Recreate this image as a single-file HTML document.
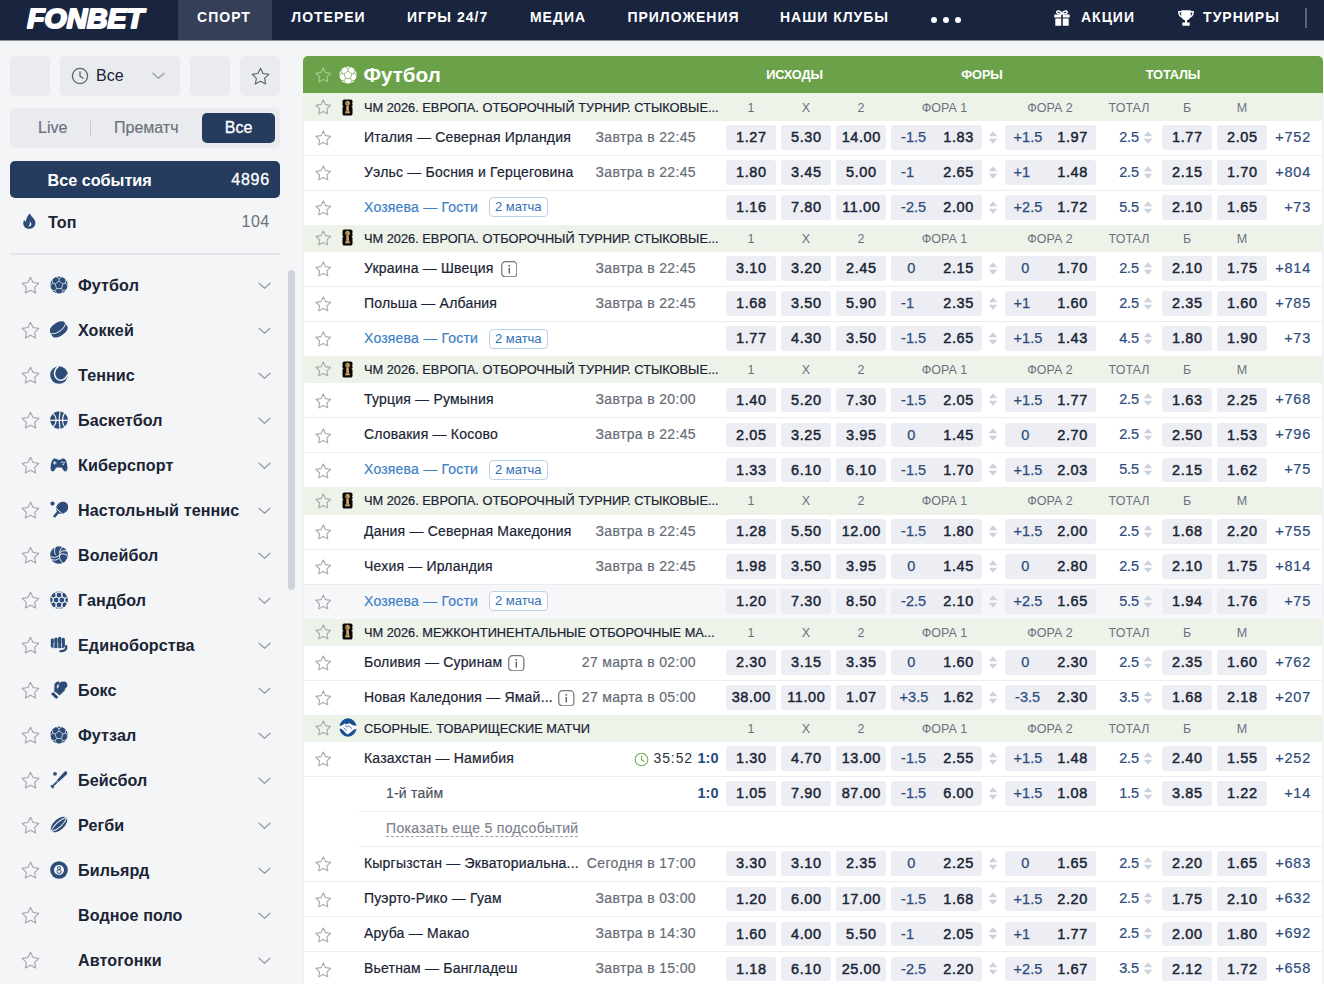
<!DOCTYPE html>
<html lang="ru"><head><meta charset="utf-8"><title>FONBET</title>
<style>
*{box-sizing:border-box;margin:0;padding:0}
html,body{width:1324px;height:984px;overflow:hidden;background:#f4f5f7;font-family:"Liberation Sans",sans-serif;color:#1a2434}
svg{display:block}
span,i,b{font-style:normal}
/* NAV */
.nav{position:absolute;left:0;top:0;width:1324px;height:41px;background:#19243f;border-bottom:1px solid #8b909d}
.logo{position:absolute;left:25px;top:5.5px}
.tabsel{position:absolute;left:178px;top:0;width:94px;height:40px;background:#353f57}
.ni{position:absolute;top:0;width:200px;height:40px;line-height:34px;text-align:center;color:#fff;font-weight:bold;font-size:14px;letter-spacing:1px;white-space:nowrap}
.dots{position:absolute;left:931px;top:16.5px;width:32px;height:6px}
.dots i{position:absolute;top:0;width:6px;height:6px;border-radius:3px;background:#fff}
.dots i:nth-child(1){left:0}.dots i:nth-child(2){left:12px}.dots i:nth-child(3){left:24px}
.nicon{position:absolute}
.vline{position:absolute;left:1305px;top:8px;width:2px;height:20px;background:#5b6478}
/* SIDEBAR */
.side{position:absolute;left:0;top:0;width:300px;height:984px}
.sb{position:absolute;top:56px;height:40px;background:#eaebef;border-radius:5px}
.clk{position:absolute;left:11px;top:11px}
.sbt{position:absolute;left:36px;top:0;line-height:40px;font-size:16px;color:#1a2434}
.chv{position:absolute}
.st{position:absolute}
.seg{position:absolute;left:10px;top:108px;width:270px;height:40px;background:#eaebef;border-radius:5px}
.sg{position:absolute;top:0;line-height:39px;font-size:16px;color:#6c7380;-webkit-text-stroke:.2px #6c7380}
.sgl{position:absolute;left:80px;top:12.500px;width:1px;height:15px;background:#c5c8cf}
.pill{position:absolute;left:192px;top:5px;width:73px;height:30px;border-radius:5px;background:#253c5f;color:#fff;font-size:16px;line-height:29px;text-align:center;-webkit-text-stroke:.3px #fff}
.allev{position:absolute;left:10px;top:161px;width:270px;height:37px;border-radius:5px;background:#253c5f;color:#fff}
.allev .t{position:absolute;left:37.500px;top:0;line-height:38px;font-size:16.200px;font-weight:bold}
.allev .n{position:absolute;right:10px;top:0;line-height:38px;font-size:16px;-webkit-text-stroke:.3px #fff;letter-spacing:.8px}
.top{position:absolute;left:10px;top:203px;width:270px;height:37px}
.top .fl{position:absolute;left:12.700px;top:10px}
.top .t{position:absolute;left:38px;top:0;line-height:38px;font-size:16.200px;font-weight:bold;color:#1a2434}
.top .n{position:absolute;right:10.500px;top:0;line-height:38px;font-size:16px;color:#6b717c;letter-spacing:.4px}
.hr{position:absolute;left:10px;top:252.500px;width:270px;height:2px;background:#e3e5e9}
.scr{position:absolute;left:288px;top:270px;width:6.500px;height:320px;border-radius:3.500px;background:#d1d4dd}
.sp{position:absolute;left:0;width:284px;height:45px}
.sp .st{left:20px;top:11.500px}
.sp .ic{position:absolute;left:49.750px;top:13px}
.sp .t{position:absolute;left:78px;top:0;line-height:45px;font-size:16.100px;font-weight:bold;letter-spacing:.1px;color:#1a2434;white-space:nowrap}
.sp .chv{left:257.700px;top:18.500px}
/* TABLE */
.tbl{position:absolute;left:303px;top:56px;width:1020px;height:940px;background:#fff;border-radius:5px 5px 0 0;overflow:hidden}
.gh{position:relative;height:37px;background:#6ba249}
.gic{position:absolute;left:36px;top:9.500px}
.gt{position:absolute;left:60.500px;top:0;line-height:37px;font-size:20.600px;font-weight:bold;color:#fff}
.gl{position:absolute;top:0;width:200px;text-align:center;line-height:38px;font-size:12.800px;font-weight:bold;color:#fff;letter-spacing:-.15px}
.lh{position:relative;height:27.150px;margin-top:-1px;background:#eef3ea;z-index:1}
.lh.f{margin-top:0;height:27.700px;border-top:1px solid #eef3ea}
.lic{position:absolute;left:39px;top:4.500px}
.lt{position:absolute;left:61px;top:0;line-height:28px;font-size:12.800px;color:#1a2434;white-space:nowrap;-webkit-text-stroke:.2px}
.hd{position:absolute;top:0;width:50px;text-align:center;line-height:28px;font-size:12.500px;color:#6b717c;white-space:nowrap}
.r{position:relative;height:35.050px;box-shadow:inset 1px 0 0 #edeef1,inset -1px 0 0 #edeef1;border-bottom:1px solid #ebedf0;background:#fff}
.r.hov{background:#f7f7f9}
.r.subr{border-bottom:none}
.r.subr:after{content:"";position:absolute;left:56px;right:0;bottom:0;height:1px;background:#ebedf0}
.nm{position:absolute;left:61px;top:0;line-height:32.500px;font-size:14px;letter-spacing:.2px;color:#1a2434;white-space:nowrap;-webkit-text-stroke:.2px}
.nm.bl{color:#3c80c6}
.nm.sn{left:83px;color:#4b525e}
.nm.mr{left:83px;color:#7d838d;letter-spacing:.33px;text-decoration:underline dashed #9a9fa8 1px;text-underline-offset:3px}
.bd{position:absolute;left:186px;top:6.500px;width:58.500px;height:20px;border:1px solid #b9d2ec;border-radius:4px;font-size:13px;line-height:18px;text-align:center;color:#2f6fb4;background:#fff}
.inf{position:absolute;top:8.900px;margin-left:-.5px}
.tm{position:absolute;right:627px;top:0;line-height:32.500px;font-size:14px;letter-spacing:.35px;color:#666c78;white-space:nowrap;-webkit-text-stroke:.2px}
.lclk{position:absolute;left:331px;top:9.500px}
.ltm{position:absolute;left:350.500px;top:0;line-height:32.500px;font-size:14px;letter-spacing:.9px;color:#2a3140}
.sc{position:absolute;right:604.500px;top:0;line-height:32.500px;font-size:14.500px;font-weight:bold;color:#254a80}
.c{position:absolute;top:4.300px;width:50px;height:24.800px;border-radius:3px;background:#eceef3;text-align:center;line-height:24.500px;font-size:14.500px;font-weight:normal;-webkit-text-stroke:.45px #1a2434;letter-spacing:.6px;text-indent:.6px;color:#1a2434}
.c.w{width:90.500px}
.c b{font-weight:normal}
.c .h{position:absolute;left:10.100px;text-align:left;-webkit-text-stroke:.25px #2d4c7c;text-indent:0;font-weight:normal;color:#2d4c7c;letter-spacing:0}
.c .v{position:absolute;right:0;width:46.500px;text-align:center}
.ud{position:absolute;top:9px}
.tot{position:absolute;right:184px;top:0;line-height:32.500px;font-size:14.500px;color:#2d4c7c;letter-spacing:-.1px;-webkit-text-stroke:.2px}
.more{position:absolute;right:12px;top:0;line-height:32.500px;font-size:14.500px;color:#2d4c7c;letter-spacing:.75px;-webkit-text-stroke:.2px}
.c .h.z{left:16.200px}
.c .h.p{left:8.600px}

</style></head>
<body>
<div class="nav">
<div class="logo"><svg width="124" height="26" viewBox="0 0 124 26"><text x="2.300" y="22" textLength="116.500" lengthAdjust="spacingAndGlyphs" font-family="Liberation Sans, sans-serif" font-weight="bold" font-style="italic" font-size="26.800" fill="#fff" stroke="#fff" stroke-width="2" stroke-linejoin="round">FONBET</text></svg></div>
<div class="tabsel"></div>
<div class="ni" style="left:124.0px">СПОРТ</div>
<div class="ni" style="left:228.5px">ЛОТЕРЕИ</div>
<div class="ni" style="left:347.6px">ИГРЫ 24/7</div>
<div class="ni" style="left:458.0px">МЕДИА</div>
<div class="ni" style="left:583.5px">ПРИЛОЖЕНИЯ</div>
<div class="ni" style="left:734.5px">НАШИ КЛУБЫ</div>
<div class="dots"><i></i><i></i><i></i></div>
<div class="nicon" style="left:1053px;top:9px"><svg width="18" height="18" viewBox="0 0 18 18"><path d="M1.300 5.400h6.900v3.000H1.300zM9.800 5.400h6.900v3.000H9.800zM2.300 9.500h5.900v7.300H2.300zM9.800 9.500h5.900v7.300H9.800z" fill="#fff"/><path d="M9 5c-1.500-3.800-5.500-3.600-5.200-1.700C4.100 5 7 5 9 5zM9 5c1.500-3.800 5.500-3.600 5.200-1.700C13.900 5 11 5 9 5z" fill="none" stroke="#fff" stroke-width="1.500"/></svg></div>
<div class="ni" style="left:1008.0px">АКЦИИ</div>
<div class="nicon" style="left:1177px;top:9px"><svg width="18" height="18" viewBox="0 0 18 18"><path d="M4.200 1.300h9.600v4.600c0 3.200-2.000 5.300-4.800 5.300S4.200 9.100 4.200 5.900z" fill="#fff"/><path d="M4.400 2.800H1.800c0 3.200 1.300 4.800 3.400 5.300M13.600 2.800h2.600c0 3.200-1.300 4.800-3.400 5.300" fill="none" stroke="#fff" stroke-width="1.400"/><path d="M8 10.500h2v3.200H8zM5.300 13.500h7.400v3.300H5.300z" fill="#fff"/></svg></div>
<div class="ni" style="left:1141.5px">ТУРНИРЫ</div>
<div class="vline"></div>
</div>
<div class="side">
<div class="sb" style="left:10px;width:40px"></div>
<div class="sb" style="left:60px;width:120px"><span class="clk"><svg width="18" height="18" viewBox="0 0 18 18"><circle cx="9" cy="9" r="7.6" fill="none" stroke="#5d6470" stroke-width="1.3"/><path d="M9 4.6V9.3l3 1.8" fill="none" stroke="#5d6470" stroke-width="1.3" stroke-linecap="round" stroke-linejoin="round"/></svg></span><span class="sbt">Все</span><span class="chv" style="left:92px;top:16px"><svg width="13" height="8" viewBox="0 0 13 8"><path d="M1 1.200l5.500 5L12 1.200" fill="none" stroke="#9a9fa8" stroke-width="1.4" stroke-linecap="round" stroke-linejoin="round"/></svg></span></div>
<div class="sb" style="left:190px;width:40px"></div>
<div class="sb" style="left:240px;width:40px"><span class="st" style="left:9.5px;top:9.5px"><svg width="21" height="21" viewBox="0 0 24 24"><path d="M12 2.6l2.9 6 6.6.9-4.8 4.6 1.2 6.5L12 17.5l-5.9 3.1 1.2-6.5L2.5 9.5l6.6-.9z" fill="none" stroke="#5f6672" stroke-width="1.35" stroke-linejoin="round"/></svg></span></div>
<div class="seg"><span class="sg" style="left:28px">Live</span><i class="sgl"></i><span class="sg" style="left:104px">Прематч</span><span class="pill">Все</span></div>
<div class="allev"><span class="t">Все события</span><span class="n">4896</span></div>
<div class="top"><span class="fl"><svg width="13" height="16" viewBox="0 0 13 16"><path d="M6.900.2C7.400 3.200 12.400 5.200 12.400 10c0 3.400-2.600 5.800-6 5.800S.3 13.600.3 10.400c0-1.600.4-2.800.8-3.600.5 1 1.100 1.600 1.800 1.900C2.900 5.200 5 2.200 6.900.2z" fill="#2d4d78"/><path d="M6.600 8.600c1.800 1.200 2.200 2.800 1.400 4-.6.900-1.800 1.100-2.600.8 1.400-1 1.700-2.800 1.200-4.800z" fill="#f4f5f7"/></svg></span><span class="t">Топ</span><span class="n">104</span></div>
<div class="hr"></div>
<div class="scr"></div>
<div class="sp" style="top:263px"><span class="st"><svg width="21" height="21" viewBox="0 0 24 24"><path d="M12 2.6l2.9 6 6.6.9-4.8 4.6 1.2 6.5L12 17.5l-5.9 3.1 1.2-6.5L2.5 9.5l6.6-.9z" fill="none" stroke="#a3a6ab" stroke-width="1.3" stroke-linejoin="round"/></svg></span><span class="ic"><svg width="18" height="18" viewBox="0 0 18 18"><circle cx="9" cy="9" r="8.800" fill="#2d4d78"/><path d="M9 5.1 L12.9 7.93 L11.41 12.52 L6.59 12.52 L5.1 7.93ZM9 5.1L9 2.7M9 2.7L5.44 0.47M9 2.7L12.56 0.47M12.9 7.93L15.18 7.19M15.18 7.19L16.2 3.12M15.18 7.19L18.4 9.89M11.41 12.52L12.82 14.46M12.82 14.46L17.01 14.17M12.82 14.46L11.25 18.35M6.59 12.52L5.18 14.46M5.18 14.46L6.75 18.35M5.18 14.46L0.99 14.17M5.1 7.93L2.82 7.19M2.82 7.19L-0.4 9.89M2.82 7.19L1.8 3.12" fill="none" stroke="#f4f5f7" stroke-width=".7" stroke-linejoin="round"/><circle cx="9" cy="9" r="9.600" fill="none" stroke="#f4f5f7" stroke-width="1.600"/></svg></span><span class="t">Футбол</span><span class="chv"><svg width="13" height="8" viewBox="0 0 13 8"><path d="M1 1.200l5.500 5L12 1.200" fill="none" stroke="#9a9fa8" stroke-width="1.4" stroke-linecap="round" stroke-linejoin="round"/></svg></span></div>
<div class="sp" style="top:308px"><span class="st"><svg width="21" height="21" viewBox="0 0 24 24"><path d="M12 2.6l2.9 6 6.6.9-4.8 4.6 1.2 6.5L12 17.5l-5.9 3.1 1.2-6.5L2.5 9.5l6.6-.9z" fill="none" stroke="#a3a6ab" stroke-width="1.3" stroke-linejoin="round"/></svg></span><span class="ic"><svg width="18" height="18" viewBox="0 0 18 18"><g transform="rotate(-34 9 9)"><ellipse cx="9" cy="5.700" rx="8.900" ry="4.100" fill="#2d4d78"/><path d="M.1 6.700A8.900 4.100 0 0 0 17.900 6.700V10.800A8.900 4.100 0 0 1 .1 10.800z" fill="#2d4d78"/></g></svg></span><span class="t">Хоккей</span><span class="chv"><svg width="13" height="8" viewBox="0 0 13 8"><path d="M1 1.200l5.500 5L12 1.200" fill="none" stroke="#9a9fa8" stroke-width="1.4" stroke-linecap="round" stroke-linejoin="round"/></svg></span></div>
<div class="sp" style="top:353px"><span class="st"><svg width="21" height="21" viewBox="0 0 24 24"><path d="M12 2.6l2.9 6 6.6.9-4.8 4.6 1.2 6.5L12 17.5l-5.9 3.1 1.2-6.5L2.5 9.5l6.6-.9z" fill="none" stroke="#a3a6ab" stroke-width="1.3" stroke-linejoin="round"/></svg></span><span class="ic"><svg width="18" height="18" viewBox="0 0 18 18"><circle cx="9" cy="9" r="8.800" fill="#2d4d78"/><path d="M8.400.3C3.600 3.800 3.400 10.300 7 13s8.600 1 10.700-4.400" fill="none" stroke="#f4f5f7" stroke-width="1.500"/></svg></span><span class="t">Теннис</span><span class="chv"><svg width="13" height="8" viewBox="0 0 13 8"><path d="M1 1.200l5.500 5L12 1.200" fill="none" stroke="#9a9fa8" stroke-width="1.4" stroke-linecap="round" stroke-linejoin="round"/></svg></span></div>
<div class="sp" style="top:398px"><span class="st"><svg width="21" height="21" viewBox="0 0 24 24"><path d="M12 2.6l2.9 6 6.6.9-4.8 4.6 1.2 6.5L12 17.5l-5.9 3.1 1.2-6.5L2.5 9.5l6.6-.9z" fill="none" stroke="#a3a6ab" stroke-width="1.3" stroke-linejoin="round"/></svg></span><span class="ic"><svg width="18" height="18" viewBox="0 0 18 18"><circle cx="9" cy="9" r="8.800" fill="#2d4d78"/><path d="M.2 9.400h17.600M10 .2C9 5.500 9 12.500 10 17.800M2.800 2.400C7.200 6 7.200 12.500 3 15.800M14.600 1.800c-2.800 4-2.800 10.800.2 14.600" fill="none" stroke="#f4f5f7" stroke-width="1.150"/></svg></span><span class="t">Баскетбол</span><span class="chv"><svg width="13" height="8" viewBox="0 0 13 8"><path d="M1 1.200l5.500 5L12 1.200" fill="none" stroke="#9a9fa8" stroke-width="1.4" stroke-linecap="round" stroke-linejoin="round"/></svg></span></div>
<div class="sp" style="top:443px"><span class="st"><svg width="21" height="21" viewBox="0 0 24 24"><path d="M12 2.6l2.9 6 6.6.9-4.8 4.6 1.2 6.5L12 17.5l-5.9 3.1 1.2-6.5L2.5 9.5l6.6-.9z" fill="none" stroke="#a3a6ab" stroke-width="1.3" stroke-linejoin="round"/></svg></span><span class="ic"><svg width="18" height="18" viewBox="0 0 18 18"><path d="M3.400 3c1.400-.8 3.100-.5 4.100.8h3c1-1.300 2.700-1.600 4.100-.8 1.500.9 2.100 3.200 2.600 6.300.5 3.200.3 5.400-1.200 6-1.400.6-2.500-.7-3.500-2.600-.4-.9-1-1.300-1.800-1.300H7.300c-.8 0-1.400.4-1.800 1.300-1 1.900-2.100 3.200-3.500 2.600-1.500-.6-1.700-2.800-1.200-6C1.300 6.200 1.900 3.900 3.400 3z" fill="#2d4d78"/><path d="M3 6.900h3.400M4.700 5.200v3.400" stroke="#f4f5f7" stroke-width="1"/><circle cx="12" cy="6" r=".8" fill="#f4f5f7"/><circle cx="14.100" cy="6.600" r=".8" fill="#f4f5f7"/><circle cx="13.300" cy="8.300" r=".8" fill="#f4f5f7"/></svg></span><span class="t">Киберспорт</span><span class="chv"><svg width="13" height="8" viewBox="0 0 13 8"><path d="M1 1.200l5.500 5L12 1.200" fill="none" stroke="#9a9fa8" stroke-width="1.4" stroke-linecap="round" stroke-linejoin="round"/></svg></span></div>
<div class="sp" style="top:488px"><span class="st"><svg width="21" height="21" viewBox="0 0 24 24"><path d="M12 2.6l2.9 6 6.6.9-4.8 4.6 1.2 6.5L12 17.5l-5.9 3.1 1.2-6.5L2.5 9.5l6.6-.9z" fill="none" stroke="#a3a6ab" stroke-width="1.3" stroke-linejoin="round"/></svg></span><span class="ic"><svg width="18" height="18" viewBox="0 0 18 18"><g transform="rotate(42 11.600 7.400)"><ellipse cx="11.600" cy="6.600" rx="5.700" ry="6.500" fill="#2d4d78"/><rect x="10.300" y="12.600" width="2.600" height="6.400" rx=".9" fill="#2d4d78"/><path d="M5.500 11h12.200" stroke="#f4f5f7" stroke-width=".9"/></g><circle cx="2.500" cy="2.600" r="2.100" fill="#2d4d78"/></svg></span><span class="t">Настольный теннис</span><span class="chv"><svg width="13" height="8" viewBox="0 0 13 8"><path d="M1 1.200l5.500 5L12 1.200" fill="none" stroke="#9a9fa8" stroke-width="1.4" stroke-linecap="round" stroke-linejoin="round"/></svg></span></div>
<div class="sp" style="top:533px"><span class="st"><svg width="21" height="21" viewBox="0 0 24 24"><path d="M12 2.6l2.9 6 6.6.9-4.8 4.6 1.2 6.5L12 17.5l-5.9 3.1 1.2-6.5L2.5 9.5l6.6-.9z" fill="none" stroke="#a3a6ab" stroke-width="1.3" stroke-linejoin="round"/></svg></span><span class="ic"><svg width="18" height="18" viewBox="0 0 18 18"><circle cx="9" cy="9" r="8.800" fill="#2d4d78"/><path d="M9.800 8.600C9.200 5 10.500 2 13.200 .9M9.800 8.600c3-1.500 6.200-.6 8 1.600M9.800 8.600C7.800 11.500 4 12 .6 10.600M5.600 1C3.800 3.600 4.200 7.200 6.200 9.200M17 5.200c-2.600-1.200-5.400-.4-7.200 1.400M12.800 17c-2.400-1.800-3.800-5-3-8.400M1.400 13.400c3 1.400 6 .6 7.800-1.200" fill="none" stroke="#f4f5f7" stroke-width="1"/></svg></span><span class="t">Волейбол</span><span class="chv"><svg width="13" height="8" viewBox="0 0 13 8"><path d="M1 1.200l5.500 5L12 1.200" fill="none" stroke="#9a9fa8" stroke-width="1.4" stroke-linecap="round" stroke-linejoin="round"/></svg></span></div>
<div class="sp" style="top:578px"><span class="st"><svg width="21" height="21" viewBox="0 0 24 24"><path d="M12 2.6l2.9 6 6.6.9-4.8 4.6 1.2 6.5L12 17.5l-5.9 3.1 1.2-6.5L2.5 9.5l6.6-.9z" fill="none" stroke="#a3a6ab" stroke-width="1.3" stroke-linejoin="round"/></svg></span><span class="ic"><svg width="18" height="18" viewBox="0 0 18 18"><clipPath id="hbc"><circle cx="9" cy="9" r="8.800"/></clipPath><circle cx="9" cy="9" r="8.800" fill="#2d4d78"/><path clip-path="url(#hbc)" d="M-5.29 -4.2 L-2.43 -2.55 L-2.43 0.75 L-5.29 2.4 L-8.15 0.75 L-8.15 -2.55ZM0.43 -4.2 L3.28 -2.55 L3.28 0.75 L0.43 2.4 L-2.43 0.75 L-2.43 -2.55ZM6.14 -4.2 L9 -2.55 L9 0.75 L6.14 2.4 L3.28 0.75 L3.28 -2.55ZM11.86 -4.2 L14.72 -2.55 L14.72 0.75 L11.86 2.4 L9 0.75 L9 -2.55ZM17.57 -4.2 L20.43 -2.55 L20.43 0.75 L17.57 2.4 L14.72 0.75 L14.72 -2.55ZM23.29 -4.2 L26.15 -2.55 L26.15 0.75 L23.29 2.4 L20.43 0.75 L20.43 -2.55ZM29.01 -4.2 L31.86 -2.55 L31.86 0.75 L29.01 2.4 L26.15 0.75 L26.15 -2.55ZM-8.15 0.75 L-5.29 2.4 L-5.29 5.7 L-8.15 7.35 L-11.01 5.7 L-11.01 2.4ZM-2.43 0.75 L0.43 2.4 L0.43 5.7 L-2.43 7.35 L-5.29 5.7 L-5.29 2.4ZM3.28 0.75 L6.14 2.4 L6.14 5.7 L3.28 7.35 L0.43 5.7 L0.43 2.4ZM9 0.75 L11.86 2.4 L11.86 5.7 L9 7.35 L6.14 5.7 L6.14 2.4ZM14.72 0.75 L17.57 2.4 L17.57 5.7 L14.72 7.35 L11.86 5.7 L11.86 2.4ZM20.43 0.75 L23.29 2.4 L23.29 5.7 L20.43 7.35 L17.57 5.7 L17.57 2.4ZM26.15 0.75 L29.01 2.4 L29.01 5.7 L26.15 7.35 L23.29 5.7 L23.29 2.4ZM-5.29 5.7 L-2.43 7.35 L-2.43 10.65 L-5.29 12.3 L-8.15 10.65 L-8.15 7.35ZM0.43 5.7 L3.28 7.35 L3.28 10.65 L0.43 12.3 L-2.43 10.65 L-2.43 7.35ZM6.14 5.7 L9 7.35 L9 10.65 L6.14 12.3 L3.28 10.65 L3.28 7.35ZM11.86 5.7 L14.72 7.35 L14.72 10.65 L11.86 12.3 L9 10.65 L9 7.35ZM17.57 5.7 L20.43 7.35 L20.43 10.65 L17.57 12.3 L14.72 10.65 L14.72 7.35ZM23.29 5.7 L26.15 7.35 L26.15 10.65 L23.29 12.3 L20.43 10.65 L20.43 7.35ZM29.01 5.7 L31.86 7.35 L31.86 10.65 L29.01 12.3 L26.15 10.65 L26.15 7.35ZM-8.15 10.65 L-5.29 12.3 L-5.29 15.6 L-8.15 17.25 L-11.01 15.6 L-11.01 12.3ZM-2.43 10.65 L0.43 12.3 L0.43 15.6 L-2.43 17.25 L-5.29 15.6 L-5.29 12.3ZM3.28 10.65 L6.14 12.3 L6.14 15.6 L3.28 17.25 L0.43 15.6 L0.43 12.3ZM9 10.65 L11.86 12.3 L11.86 15.6 L9 17.25 L6.14 15.6 L6.14 12.3ZM14.72 10.65 L17.57 12.3 L17.57 15.6 L14.72 17.25 L11.86 15.6 L11.86 12.3ZM20.43 10.65 L23.29 12.3 L23.29 15.6 L20.43 17.25 L17.57 15.6 L17.57 12.3ZM26.15 10.65 L29.01 12.3 L29.01 15.6 L26.15 17.25 L23.29 15.6 L23.29 12.3ZM-5.29 15.6 L-2.43 17.25 L-2.43 20.55 L-5.29 22.2 L-8.15 20.55 L-8.15 17.25ZM0.43 15.6 L3.28 17.25 L3.28 20.55 L0.43 22.2 L-2.43 20.55 L-2.43 17.25ZM6.14 15.6 L9 17.25 L9 20.55 L6.14 22.2 L3.28 20.55 L3.28 17.25ZM11.86 15.6 L14.72 17.25 L14.72 20.55 L11.86 22.2 L9 20.55 L9 17.25ZM17.57 15.6 L20.43 17.25 L20.43 20.55 L17.57 22.2 L14.72 20.55 L14.72 17.25ZM23.29 15.6 L26.15 17.25 L26.15 20.55 L23.29 22.2 L20.43 20.55 L20.43 17.25ZM29.01 15.6 L31.86 17.25 L31.86 20.55 L29.01 22.2 L26.15 20.55 L26.15 17.25Z" fill="none" stroke="#f4f5f7" stroke-width=".95"/></svg></span><span class="t">Гандбол</span><span class="chv"><svg width="13" height="8" viewBox="0 0 13 8"><path d="M1 1.200l5.500 5L12 1.200" fill="none" stroke="#9a9fa8" stroke-width="1.4" stroke-linecap="round" stroke-linejoin="round"/></svg></span></div>
<div class="sp" style="top:623px"><span class="st"><svg width="21" height="21" viewBox="0 0 24 24"><path d="M12 2.6l2.9 6 6.6.9-4.8 4.6 1.2 6.5L12 17.5l-5.9 3.1 1.2-6.5L2.5 9.5l6.6-.9z" fill="none" stroke="#a3a6ab" stroke-width="1.3" stroke-linejoin="round"/></svg></span><span class="ic"><svg width="18" height="18" viewBox="0 0 18 18"><g transform="translate(0 -1)"><rect x=".8" y="3.600" width="3.100" height="9" rx="1.400" fill="#2d4d78"/><rect x="4.300" y="2.400" width="3.300" height="10.200" rx="1.500" fill="#2d4d78"/><rect x="8" y="1.700" width="3.300" height="10.900" rx="1.500" fill="#2d4d78"/><rect x="11.700" y="2.700" width="3.200" height="9.900" rx="1.500" fill="#2d4d78"/><path d="M2.300 8.500h11v4.600h-11z" fill="#2d4d78"/><path d="M3.900 8v5.200M7.800 8v5.200M11.500 8v4.600" stroke="#f4f5f7" stroke-width=".8"/><path d="M16.200 11.200c.6 3-1.600 5.200-5.700 5" fill="none" stroke="#2d4d78" stroke-width="2.300" stroke-linecap="round"/></g></svg></span><span class="t">Единоборства</span><span class="chv"><svg width="13" height="8" viewBox="0 0 13 8"><path d="M1 1.200l5.500 5L12 1.200" fill="none" stroke="#9a9fa8" stroke-width="1.4" stroke-linecap="round" stroke-linejoin="round"/></svg></span></div>
<div class="sp" style="top:668px"><span class="st"><svg width="21" height="21" viewBox="0 0 24 24"><path d="M12 2.6l2.9 6 6.6.9-4.8 4.6 1.2 6.5L12 17.5l-5.9 3.1 1.2-6.5L2.5 9.5l6.6-.9z" fill="none" stroke="#a3a6ab" stroke-width="1.3" stroke-linejoin="round"/></svg></span><span class="ic"><svg width="18" height="18" viewBox="0 0 18 18"><ellipse cx="13" cy="4.400" rx="4.500" ry="3.900" transform="rotate(-25 13 4.400)" fill="#2d4d78"/><path d="M9.200 5.500l6.300 3.300-6 5.800-4.800-4.400z" fill="#2d4d78"/><path d="M5.600 10V5.200c0-1.800 1.200-3 2.800-3.300" fill="none" stroke="#2d4d78" stroke-width="2.600" stroke-linecap="round"/><path d="M3.200 11l5.200 4.900-2.200 2L1 13z" fill="#2d4d78"/></svg></span><span class="t">Бокс</span><span class="chv"><svg width="13" height="8" viewBox="0 0 13 8"><path d="M1 1.200l5.500 5L12 1.200" fill="none" stroke="#9a9fa8" stroke-width="1.4" stroke-linecap="round" stroke-linejoin="round"/></svg></span></div>
<div class="sp" style="top:713px"><span class="st"><svg width="21" height="21" viewBox="0 0 24 24"><path d="M12 2.6l2.9 6 6.6.9-4.8 4.6 1.2 6.5L12 17.5l-5.9 3.1 1.2-6.5L2.5 9.5l6.6-.9z" fill="none" stroke="#a3a6ab" stroke-width="1.3" stroke-linejoin="round"/></svg></span><span class="ic"><svg width="18" height="18" viewBox="0 0 18 18"><circle cx="9" cy="9" r="8.800" fill="#2d4d78"/><path d="M9 5.1 L12.9 7.93 L11.41 12.52 L6.59 12.52 L5.1 7.93ZM9 5.1L9 2.7M9 2.7L5.44 0.47M9 2.7L12.56 0.47M12.9 7.93L15.18 7.19M15.18 7.19L16.2 3.12M15.18 7.19L18.4 9.89M11.41 12.52L12.82 14.46M12.82 14.46L17.01 14.17M12.82 14.46L11.25 18.35M6.59 12.52L5.18 14.46M5.18 14.46L6.75 18.35M5.18 14.46L0.99 14.17M5.1 7.93L2.82 7.19M2.82 7.19L-0.4 9.89M2.82 7.19L1.8 3.12" fill="none" stroke="#f4f5f7" stroke-width=".7" stroke-linejoin="round"/><circle cx="9" cy="9" r="9.600" fill="none" stroke="#f4f5f7" stroke-width="1.600"/></svg></span><span class="t">Футзал</span><span class="chv"><svg width="13" height="8" viewBox="0 0 13 8"><path d="M1 1.200l5.500 5L12 1.200" fill="none" stroke="#9a9fa8" stroke-width="1.4" stroke-linecap="round" stroke-linejoin="round"/></svg></span></div>
<div class="sp" style="top:758px"><span class="st"><svg width="21" height="21" viewBox="0 0 24 24"><path d="M12 2.6l2.9 6 6.6.9-4.8 4.6 1.2 6.5L12 17.5l-5.9 3.1 1.2-6.5L2.5 9.5l6.6-.9z" fill="none" stroke="#a3a6ab" stroke-width="1.3" stroke-linejoin="round"/></svg></span><span class="ic"><svg width="18" height="18" viewBox="0 0 18 18"><path d="M16.700.8c.8.800.6 1.900-.3 2.900L8.200 11.200 6.600 9.600 14 1.200c.9-1 2-1.200 2.700-.4z" fill="#2d4d78"/><path d="M7.200 10.700l-4.700 4.600" stroke="#2d4d78" stroke-width="1.800" stroke-linecap="round"/><path d="M1.500 15l1.500 1.500" stroke="#2d4d78" stroke-width="1.800" stroke-linecap="round"/><path d="M6.200 9.200l2.400 2.400" stroke="#f4f5f7" stroke-width=".9"/><circle cx="5" cy="2.800" r="1.900" fill="#2d4d78"/></svg></span><span class="t">Бейсбол</span><span class="chv"><svg width="13" height="8" viewBox="0 0 13 8"><path d="M1 1.200l5.500 5L12 1.200" fill="none" stroke="#9a9fa8" stroke-width="1.4" stroke-linecap="round" stroke-linejoin="round"/></svg></span></div>
<div class="sp" style="top:803px"><span class="st"><svg width="21" height="21" viewBox="0 0 24 24"><path d="M12 2.6l2.9 6 6.6.9-4.8 4.6 1.2 6.5L12 17.5l-5.9 3.1 1.2-6.5L2.5 9.5l6.6-.9z" fill="none" stroke="#a3a6ab" stroke-width="1.3" stroke-linejoin="round"/></svg></span><span class="ic"><svg width="18" height="18" viewBox="0 0 18 18"><g transform="rotate(-42 9 8.500)"><ellipse cx="9" cy="8.500" rx="10" ry="5.300" fill="#2d4d78"/><path d="M-1 8c5.500-2.600 14.500-2.600 20 0M-1 9c5.500 2.600 14.500 2.600 20 0" fill="none" stroke="#f4f5f7" stroke-width="1"/></g></svg></span><span class="t">Регби</span><span class="chv"><svg width="13" height="8" viewBox="0 0 13 8"><path d="M1 1.200l5.500 5L12 1.200" fill="none" stroke="#9a9fa8" stroke-width="1.4" stroke-linecap="round" stroke-linejoin="round"/></svg></span></div>
<div class="sp" style="top:848px"><span class="st"><svg width="21" height="21" viewBox="0 0 24 24"><path d="M12 2.6l2.9 6 6.6.9-4.8 4.6 1.2 6.5L12 17.5l-5.9 3.1 1.2-6.5L2.5 9.5l6.6-.9z" fill="none" stroke="#a3a6ab" stroke-width="1.3" stroke-linejoin="round"/></svg></span><span class="ic"><svg width="18" height="18" viewBox="0 0 18 18"><circle cx="9" cy="9" r="8.800" fill="#2d4d78"/><circle cx="9" cy="9" r="5" fill="#f4f5f7"/><circle cx="9" cy="7.100" r="1.550" fill="none" stroke="#2d4d78" stroke-width="1"/><ellipse cx="9" cy="10.600" rx="2.050" ry="1.850" fill="none" stroke="#2d4d78" stroke-width="1"/></svg></span><span class="t">Бильярд</span><span class="chv"><svg width="13" height="8" viewBox="0 0 13 8"><path d="M1 1.200l5.500 5L12 1.200" fill="none" stroke="#9a9fa8" stroke-width="1.4" stroke-linecap="round" stroke-linejoin="round"/></svg></span></div>
<div class="sp" style="top:893px"><span class="st"><svg width="21" height="21" viewBox="0 0 24 24"><path d="M12 2.6l2.9 6 6.6.9-4.8 4.6 1.2 6.5L12 17.5l-5.9 3.1 1.2-6.5L2.5 9.5l6.6-.9z" fill="none" stroke="#a3a6ab" stroke-width="1.3" stroke-linejoin="round"/></svg></span><span class="ic"></span><span class="t">Водное поло</span><span class="chv"><svg width="13" height="8" viewBox="0 0 13 8"><path d="M1 1.200l5.500 5L12 1.200" fill="none" stroke="#9a9fa8" stroke-width="1.4" stroke-linecap="round" stroke-linejoin="round"/></svg></span></div>
<div class="sp" style="top:938px"><span class="st"><svg width="21" height="21" viewBox="0 0 24 24"><path d="M12 2.6l2.9 6 6.6.9-4.8 4.6 1.2 6.5L12 17.5l-5.9 3.1 1.2-6.5L2.5 9.5l6.6-.9z" fill="none" stroke="#a3a6ab" stroke-width="1.3" stroke-linejoin="round"/></svg></span><span class="ic"></span><span class="t">Автогонки</span><span class="chv"><svg width="13" height="8" viewBox="0 0 13 8"><path d="M1 1.200l5.500 5L12 1.200" fill="none" stroke="#9a9fa8" stroke-width="1.4" stroke-linecap="round" stroke-linejoin="round"/></svg></span></div>
</div>
<div class="tbl">
<div class="gh"><span class="st w" style="left:10.700px;top:9.700px"><svg width="18.5" height="18.5" viewBox="0 0 24 24"><path d="M12 2.6l2.9 6 6.6.9-4.8 4.6 1.2 6.5L12 17.5l-5.9 3.1 1.2-6.5L2.5 9.5l6.6-.9z" fill="none" stroke="#a9cf92" stroke-width="1.4" stroke-linejoin="round"/></svg></span><span class="gic"><svg width="18" height="18" viewBox="0 0 18 18"><circle cx="9" cy="9" r="8.800" fill="#fff"/><path d="M9 5.1 L12.9 7.93 L11.41 12.52 L6.59 12.52 L5.1 7.93ZM9 5.1L9 2.7M9 2.7L5.44 0.47M9 2.7L12.56 0.47M12.9 7.93L15.18 7.19M15.18 7.19L16.2 3.12M15.18 7.19L18.4 9.89M11.41 12.52L12.82 14.46M12.82 14.46L17.01 14.17M12.82 14.46L11.25 18.35M6.59 12.52L5.18 14.46M5.18 14.46L6.75 18.35M5.18 14.46L0.99 14.17M5.1 7.93L2.82 7.19M2.82 7.19L-0.4 9.89M2.82 7.19L1.8 3.12" fill="none" stroke="#6ba249" stroke-width=".7" stroke-linejoin="round"/><circle cx="9" cy="9" r="9.600" fill="none" stroke="#6ba249" stroke-width="1.600"/></svg></span><span class="gt">Футбол</span><span class="gl" style="left:391.5px">ИСХОДЫ</span><span class="gl" style="left:579px">ФОРЫ</span><span class="gl" style="left:770px">ТОТАЛЫ</span></div>
<div class="lh f"><span class="st" style="left:10.700px;top:4.300px"><svg width="18.5" height="18.5" viewBox="0 0 24 24"><path d="M12 2.6l2.9 6 6.6.9-4.8 4.6 1.2 6.5L12 17.5l-5.9 3.1 1.2-6.5L2.5 9.5l6.6-.9z" fill="none" stroke="#a3a6ab" stroke-width="1.4" stroke-linejoin="round"/></svg></span><span class="lic"><svg width="11" height="17" viewBox="0 0 11 17"><path d="M2.300.5h6.400c1.100 0 1.800.7 1.800 1.800v1.700l-.7.500.7.500v2l-1.100.7 1.100.8v6.200c0 1.100-.7 1.800-1.800 1.800H2.300c-1.100 0-1.800-.7-1.800-1.800V8.500l1.100-.8L.5 7V2.300C.5 1.200 1.200.5 2.300.5z" fill="#0a0806"/><ellipse cx="5.600" cy="4.200" rx="2.300" ry="2.500" fill="#c9a65f"/><circle cx="5" cy="4.600" r="1" fill="#8a6c34"/><path d="M4.300 6.400h2.500l.3 5.800H4.100z" fill="#b8954f"/><path d="M4.800 7.600l1.600 1.200M4.900 9.600l1.400.9" stroke="#e9dcb8" stroke-width=".7"/><rect x="3.300" y="12.300" width="4.500" height="2" fill="#d0ad66"/></svg></span><span class="lt">ЧМ 2026. ЕВРОПА. ОТБОРОЧНЫЙ ТУРНИР. СТЫКОВЫЕ...</span><span class="hd" style="left:423px">1</span><span class="hd" style="left:478px">X</span><span class="hd" style="left:533px">2</span><span class="hd" style="left:588px;width:107px">ФОРА 1</span><span class="hd" style="left:702px;width:90px">ФОРА 2</span><span class="hd" style="left:796px;width:60px">ТОТАЛ</span><span class="hd" style="left:859px">Б</span><span class="hd" style="left:914px">М</span></div>
<div class="r">
<span class="st" style="left:10.700px;top:8.300px"><svg width="18.5" height="18.5" viewBox="0 0 24 24"><path d="M12 2.6l2.9 6 6.6.9-4.8 4.6 1.2 6.5L12 17.5l-5.9 3.1 1.2-6.5L2.5 9.5l6.6-.9z" fill="none" stroke="#a3a6ab" stroke-width="1.4" stroke-linejoin="round"/></svg></span>
<span class="nm">Италия — Северная Ирландия</span>
<span class="tm">Завтра в 22:45</span>
<span class="c" style="left:423px">1.27</span><span class="c" style="left:478px">5.30</span><span class="c" style="left:533px">14.00</span><span class="c w" style="left:588px"><b class="h">-1.5</b><b class="v">1.83</b></span><span class="ud" style="left:685px"><svg width="10" height="15" viewBox="0 0 10 15"><path d="M5 1.300L9.300 6.300H.700z" fill="#cbd1dd"/><path d="M5 13.700L9.300 8.700H.700z" fill="#cbd1dd"/></svg></span><span class="c w" style="left:702px"><b class="h p">+1.5</b><b class="v">1.97</b></span><span class="tot">2.5</span><span class="ud" style="left:840px"><svg width="10" height="15" viewBox="0 0 10 15"><path d="M5 1.300L9.300 6.300H.700z" fill="#cbd1dd"/><path d="M5 13.700L9.300 8.700H.700z" fill="#cbd1dd"/></svg></span><span class="c" style="left:859px">1.77</span><span class="c" style="left:914px">2.05</span><span class="more">+752</span>
</div>
<div class="r">
<span class="st" style="left:10.700px;top:8.300px"><svg width="18.5" height="18.5" viewBox="0 0 24 24"><path d="M12 2.6l2.9 6 6.6.9-4.8 4.6 1.2 6.5L12 17.5l-5.9 3.1 1.2-6.5L2.5 9.5l6.6-.9z" fill="none" stroke="#a3a6ab" stroke-width="1.4" stroke-linejoin="round"/></svg></span>
<span class="nm">Уэльс — Босния и Герцеговина</span>
<span class="tm">Завтра в 22:45</span>
<span class="c" style="left:423px">1.80</span><span class="c" style="left:478px">3.45</span><span class="c" style="left:533px">5.00</span><span class="c w" style="left:588px"><b class="h">-1</b><b class="v">2.65</b></span><span class="ud" style="left:685px"><svg width="10" height="15" viewBox="0 0 10 15"><path d="M5 1.300L9.300 6.300H.700z" fill="#cbd1dd"/><path d="M5 13.700L9.300 8.700H.700z" fill="#cbd1dd"/></svg></span><span class="c w" style="left:702px"><b class="h p">+1</b><b class="v">1.48</b></span><span class="tot">2.5</span><span class="ud" style="left:840px"><svg width="10" height="15" viewBox="0 0 10 15"><path d="M5 1.300L9.300 6.300H.700z" fill="#cbd1dd"/><path d="M5 13.700L9.300 8.700H.700z" fill="#cbd1dd"/></svg></span><span class="c" style="left:859px">2.15</span><span class="c" style="left:914px">1.70</span><span class="more">+804</span>
</div>
<div class="r">
<span class="st" style="left:10.700px;top:8.300px"><svg width="18.5" height="18.5" viewBox="0 0 24 24"><path d="M12 2.6l2.9 6 6.6.9-4.8 4.6 1.2 6.5L12 17.5l-5.9 3.1 1.2-6.5L2.5 9.5l6.6-.9z" fill="none" stroke="#a3a6ab" stroke-width="1.4" stroke-linejoin="round"/></svg></span>
<span class="nm bl">Хозяева — Гости</span><span class="bd">2 матча</span>
<span class="c" style="left:423px">1.16</span><span class="c" style="left:478px">7.80</span><span class="c" style="left:533px">11.00</span><span class="c w" style="left:588px"><b class="h">-2.5</b><b class="v">2.00</b></span><span class="ud" style="left:685px"><svg width="10" height="15" viewBox="0 0 10 15"><path d="M5 1.300L9.300 6.300H.700z" fill="#cbd1dd"/><path d="M5 13.700L9.300 8.700H.700z" fill="#cbd1dd"/></svg></span><span class="c w" style="left:702px"><b class="h p">+2.5</b><b class="v">1.72</b></span><span class="tot">5.5</span><span class="ud" style="left:840px"><svg width="10" height="15" viewBox="0 0 10 15"><path d="M5 1.300L9.300 6.300H.700z" fill="#cbd1dd"/><path d="M5 13.700L9.300 8.700H.700z" fill="#cbd1dd"/></svg></span><span class="c" style="left:859px">2.10</span><span class="c" style="left:914px">1.65</span><span class="more">+73</span>
</div>
<div class="lh"><span class="st" style="left:10.700px;top:4.300px"><svg width="18.5" height="18.5" viewBox="0 0 24 24"><path d="M12 2.6l2.9 6 6.6.9-4.8 4.6 1.2 6.5L12 17.5l-5.9 3.1 1.2-6.5L2.5 9.5l6.6-.9z" fill="none" stroke="#a3a6ab" stroke-width="1.4" stroke-linejoin="round"/></svg></span><span class="lic"><svg width="11" height="17" viewBox="0 0 11 17"><path d="M2.300.5h6.400c1.100 0 1.800.7 1.800 1.800v1.700l-.7.500.7.500v2l-1.100.7 1.100.8v6.200c0 1.100-.7 1.800-1.800 1.800H2.300c-1.100 0-1.800-.7-1.800-1.800V8.500l1.100-.8L.5 7V2.300C.5 1.200 1.200.5 2.300.5z" fill="#0a0806"/><ellipse cx="5.600" cy="4.200" rx="2.300" ry="2.500" fill="#c9a65f"/><circle cx="5" cy="4.600" r="1" fill="#8a6c34"/><path d="M4.300 6.400h2.500l.3 5.800H4.100z" fill="#b8954f"/><path d="M4.800 7.600l1.600 1.200M4.900 9.600l1.400.9" stroke="#e9dcb8" stroke-width=".7"/><rect x="3.300" y="12.300" width="4.500" height="2" fill="#d0ad66"/></svg></span><span class="lt">ЧМ 2026. ЕВРОПА. ОТБОРОЧНЫЙ ТУРНИР. СТЫКОВЫЕ...</span><span class="hd" style="left:423px">1</span><span class="hd" style="left:478px">X</span><span class="hd" style="left:533px">2</span><span class="hd" style="left:588px;width:107px">ФОРА 1</span><span class="hd" style="left:702px;width:90px">ФОРА 2</span><span class="hd" style="left:796px;width:60px">ТОТАЛ</span><span class="hd" style="left:859px">Б</span><span class="hd" style="left:914px">М</span></div>
<div class="r">
<span class="st" style="left:10.700px;top:8.300px"><svg width="18.5" height="18.5" viewBox="0 0 24 24"><path d="M12 2.6l2.9 6 6.6.9-4.8 4.6 1.2 6.5L12 17.5l-5.9 3.1 1.2-6.5L2.5 9.5l6.6-.9z" fill="none" stroke="#a3a6ab" stroke-width="1.4" stroke-linejoin="round"/></svg></span>
<span class="nm">Украина — Швеция</span>
<span class="inf" style="left:198px"><svg width="16.600" height="16.600" viewBox="0 0 16 16"><rect x=".7" y=".7" width="14.6" height="14.6" rx="3.6" fill="#fff" stroke="#70757e" stroke-width="1.2"/><circle cx="8" cy="4.700" r=".95" fill="#5d626b"/><rect x="7.300" y="6.700" width="1.400" height="5.300" fill="#5d626b"/></svg></span>
<span class="tm">Завтра в 22:45</span>
<span class="c" style="left:423px">3.10</span><span class="c" style="left:478px">3.20</span><span class="c" style="left:533px">2.45</span><span class="c w" style="left:588px"><b class="h z">0</b><b class="v">2.15</b></span><span class="ud" style="left:685px"><svg width="10" height="15" viewBox="0 0 10 15"><path d="M5 1.300L9.300 6.300H.700z" fill="#cbd1dd"/><path d="M5 13.700L9.300 8.700H.700z" fill="#cbd1dd"/></svg></span><span class="c w" style="left:702px"><b class="h z">0</b><b class="v">1.70</b></span><span class="tot">2.5</span><span class="ud" style="left:840px"><svg width="10" height="15" viewBox="0 0 10 15"><path d="M5 1.300L9.300 6.300H.700z" fill="#cbd1dd"/><path d="M5 13.700L9.300 8.700H.700z" fill="#cbd1dd"/></svg></span><span class="c" style="left:859px">2.10</span><span class="c" style="left:914px">1.75</span><span class="more">+814</span>
</div>
<div class="r">
<span class="st" style="left:10.700px;top:8.300px"><svg width="18.5" height="18.5" viewBox="0 0 24 24"><path d="M12 2.6l2.9 6 6.6.9-4.8 4.6 1.2 6.5L12 17.5l-5.9 3.1 1.2-6.5L2.5 9.5l6.6-.9z" fill="none" stroke="#a3a6ab" stroke-width="1.4" stroke-linejoin="round"/></svg></span>
<span class="nm">Польша — Албания</span>
<span class="tm">Завтра в 22:45</span>
<span class="c" style="left:423px">1.68</span><span class="c" style="left:478px">3.50</span><span class="c" style="left:533px">5.90</span><span class="c w" style="left:588px"><b class="h">-1</b><b class="v">2.35</b></span><span class="ud" style="left:685px"><svg width="10" height="15" viewBox="0 0 10 15"><path d="M5 1.300L9.300 6.300H.700z" fill="#cbd1dd"/><path d="M5 13.700L9.300 8.700H.700z" fill="#cbd1dd"/></svg></span><span class="c w" style="left:702px"><b class="h p">+1</b><b class="v">1.60</b></span><span class="tot">2.5</span><span class="ud" style="left:840px"><svg width="10" height="15" viewBox="0 0 10 15"><path d="M5 1.300L9.300 6.300H.700z" fill="#cbd1dd"/><path d="M5 13.700L9.300 8.700H.700z" fill="#cbd1dd"/></svg></span><span class="c" style="left:859px">2.35</span><span class="c" style="left:914px">1.60</span><span class="more">+785</span>
</div>
<div class="r">
<span class="st" style="left:10.700px;top:8.300px"><svg width="18.5" height="18.5" viewBox="0 0 24 24"><path d="M12 2.6l2.9 6 6.6.9-4.8 4.6 1.2 6.5L12 17.5l-5.9 3.1 1.2-6.5L2.5 9.5l6.6-.9z" fill="none" stroke="#a3a6ab" stroke-width="1.4" stroke-linejoin="round"/></svg></span>
<span class="nm bl">Хозяева — Гости</span><span class="bd">2 матча</span>
<span class="c" style="left:423px">1.77</span><span class="c" style="left:478px">4.30</span><span class="c" style="left:533px">3.50</span><span class="c w" style="left:588px"><b class="h">-1.5</b><b class="v">2.65</b></span><span class="ud" style="left:685px"><svg width="10" height="15" viewBox="0 0 10 15"><path d="M5 1.300L9.300 6.300H.700z" fill="#cbd1dd"/><path d="M5 13.700L9.300 8.700H.700z" fill="#cbd1dd"/></svg></span><span class="c w" style="left:702px"><b class="h p">+1.5</b><b class="v">1.43</b></span><span class="tot">4.5</span><span class="ud" style="left:840px"><svg width="10" height="15" viewBox="0 0 10 15"><path d="M5 1.300L9.300 6.300H.700z" fill="#cbd1dd"/><path d="M5 13.700L9.300 8.700H.700z" fill="#cbd1dd"/></svg></span><span class="c" style="left:859px">1.80</span><span class="c" style="left:914px">1.90</span><span class="more">+73</span>
</div>
<div class="lh"><span class="st" style="left:10.700px;top:4.300px"><svg width="18.5" height="18.5" viewBox="0 0 24 24"><path d="M12 2.6l2.9 6 6.6.9-4.8 4.6 1.2 6.5L12 17.5l-5.9 3.1 1.2-6.5L2.5 9.5l6.6-.9z" fill="none" stroke="#a3a6ab" stroke-width="1.4" stroke-linejoin="round"/></svg></span><span class="lic"><svg width="11" height="17" viewBox="0 0 11 17"><path d="M2.300.5h6.400c1.100 0 1.800.7 1.800 1.800v1.700l-.7.500.7.500v2l-1.100.7 1.100.8v6.200c0 1.100-.7 1.800-1.800 1.800H2.300c-1.100 0-1.800-.7-1.800-1.800V8.500l1.100-.8L.5 7V2.300C.5 1.200 1.200.5 2.300.5z" fill="#0a0806"/><ellipse cx="5.600" cy="4.200" rx="2.300" ry="2.500" fill="#c9a65f"/><circle cx="5" cy="4.600" r="1" fill="#8a6c34"/><path d="M4.300 6.400h2.500l.3 5.800H4.100z" fill="#b8954f"/><path d="M4.800 7.600l1.600 1.200M4.900 9.600l1.400.9" stroke="#e9dcb8" stroke-width=".7"/><rect x="3.300" y="12.300" width="4.500" height="2" fill="#d0ad66"/></svg></span><span class="lt">ЧМ 2026. ЕВРОПА. ОТБОРОЧНЫЙ ТУРНИР. СТЫКОВЫЕ...</span><span class="hd" style="left:423px">1</span><span class="hd" style="left:478px">X</span><span class="hd" style="left:533px">2</span><span class="hd" style="left:588px;width:107px">ФОРА 1</span><span class="hd" style="left:702px;width:90px">ФОРА 2</span><span class="hd" style="left:796px;width:60px">ТОТАЛ</span><span class="hd" style="left:859px">Б</span><span class="hd" style="left:914px">М</span></div>
<div class="r">
<span class="st" style="left:10.700px;top:8.300px"><svg width="18.5" height="18.5" viewBox="0 0 24 24"><path d="M12 2.6l2.9 6 6.6.9-4.8 4.6 1.2 6.5L12 17.5l-5.9 3.1 1.2-6.5L2.5 9.5l6.6-.9z" fill="none" stroke="#a3a6ab" stroke-width="1.4" stroke-linejoin="round"/></svg></span>
<span class="nm">Турция — Румыния</span>
<span class="tm">Завтра в 20:00</span>
<span class="c" style="left:423px">1.40</span><span class="c" style="left:478px">5.20</span><span class="c" style="left:533px">7.30</span><span class="c w" style="left:588px"><b class="h">-1.5</b><b class="v">2.05</b></span><span class="ud" style="left:685px"><svg width="10" height="15" viewBox="0 0 10 15"><path d="M5 1.300L9.300 6.300H.700z" fill="#cbd1dd"/><path d="M5 13.700L9.300 8.700H.700z" fill="#cbd1dd"/></svg></span><span class="c w" style="left:702px"><b class="h p">+1.5</b><b class="v">1.77</b></span><span class="tot">2.5</span><span class="ud" style="left:840px"><svg width="10" height="15" viewBox="0 0 10 15"><path d="M5 1.300L9.300 6.300H.700z" fill="#cbd1dd"/><path d="M5 13.700L9.300 8.700H.700z" fill="#cbd1dd"/></svg></span><span class="c" style="left:859px">1.63</span><span class="c" style="left:914px">2.25</span><span class="more">+768</span>
</div>
<div class="r">
<span class="st" style="left:10.700px;top:8.300px"><svg width="18.5" height="18.5" viewBox="0 0 24 24"><path d="M12 2.6l2.9 6 6.6.9-4.8 4.6 1.2 6.5L12 17.5l-5.9 3.1 1.2-6.5L2.5 9.5l6.6-.9z" fill="none" stroke="#a3a6ab" stroke-width="1.4" stroke-linejoin="round"/></svg></span>
<span class="nm">Словакия — Косово</span>
<span class="tm">Завтра в 22:45</span>
<span class="c" style="left:423px">2.05</span><span class="c" style="left:478px">3.25</span><span class="c" style="left:533px">3.95</span><span class="c w" style="left:588px"><b class="h z">0</b><b class="v">1.45</b></span><span class="ud" style="left:685px"><svg width="10" height="15" viewBox="0 0 10 15"><path d="M5 1.300L9.300 6.300H.700z" fill="#cbd1dd"/><path d="M5 13.700L9.300 8.700H.700z" fill="#cbd1dd"/></svg></span><span class="c w" style="left:702px"><b class="h z">0</b><b class="v">2.70</b></span><span class="tot">2.5</span><span class="ud" style="left:840px"><svg width="10" height="15" viewBox="0 0 10 15"><path d="M5 1.300L9.300 6.300H.700z" fill="#cbd1dd"/><path d="M5 13.700L9.300 8.700H.700z" fill="#cbd1dd"/></svg></span><span class="c" style="left:859px">2.50</span><span class="c" style="left:914px">1.53</span><span class="more">+796</span>
</div>
<div class="r">
<span class="st" style="left:10.700px;top:8.300px"><svg width="18.5" height="18.5" viewBox="0 0 24 24"><path d="M12 2.6l2.9 6 6.6.9-4.8 4.6 1.2 6.5L12 17.5l-5.9 3.1 1.2-6.5L2.5 9.5l6.6-.9z" fill="none" stroke="#a3a6ab" stroke-width="1.4" stroke-linejoin="round"/></svg></span>
<span class="nm bl">Хозяева — Гости</span><span class="bd">2 матча</span>
<span class="c" style="left:423px">1.33</span><span class="c" style="left:478px">6.10</span><span class="c" style="left:533px">6.10</span><span class="c w" style="left:588px"><b class="h">-1.5</b><b class="v">1.70</b></span><span class="ud" style="left:685px"><svg width="10" height="15" viewBox="0 0 10 15"><path d="M5 1.300L9.300 6.300H.700z" fill="#cbd1dd"/><path d="M5 13.700L9.300 8.700H.700z" fill="#cbd1dd"/></svg></span><span class="c w" style="left:702px"><b class="h p">+1.5</b><b class="v">2.03</b></span><span class="tot">5.5</span><span class="ud" style="left:840px"><svg width="10" height="15" viewBox="0 0 10 15"><path d="M5 1.300L9.300 6.300H.700z" fill="#cbd1dd"/><path d="M5 13.700L9.300 8.700H.700z" fill="#cbd1dd"/></svg></span><span class="c" style="left:859px">2.15</span><span class="c" style="left:914px">1.62</span><span class="more">+75</span>
</div>
<div class="lh"><span class="st" style="left:10.700px;top:4.300px"><svg width="18.5" height="18.5" viewBox="0 0 24 24"><path d="M12 2.6l2.9 6 6.6.9-4.8 4.6 1.2 6.5L12 17.5l-5.9 3.1 1.2-6.5L2.5 9.5l6.6-.9z" fill="none" stroke="#a3a6ab" stroke-width="1.4" stroke-linejoin="round"/></svg></span><span class="lic"><svg width="11" height="17" viewBox="0 0 11 17"><path d="M2.300.5h6.400c1.100 0 1.800.7 1.800 1.800v1.700l-.7.500.7.500v2l-1.100.7 1.100.8v6.200c0 1.100-.7 1.800-1.800 1.800H2.300c-1.100 0-1.800-.7-1.800-1.800V8.500l1.100-.8L.5 7V2.300C.5 1.200 1.200.5 2.300.5z" fill="#0a0806"/><ellipse cx="5.600" cy="4.200" rx="2.300" ry="2.500" fill="#c9a65f"/><circle cx="5" cy="4.600" r="1" fill="#8a6c34"/><path d="M4.300 6.400h2.500l.3 5.800H4.100z" fill="#b8954f"/><path d="M4.800 7.600l1.600 1.200M4.900 9.600l1.400.9" stroke="#e9dcb8" stroke-width=".7"/><rect x="3.300" y="12.300" width="4.500" height="2" fill="#d0ad66"/></svg></span><span class="lt">ЧМ 2026. ЕВРОПА. ОТБОРОЧНЫЙ ТУРНИР. СТЫКОВЫЕ...</span><span class="hd" style="left:423px">1</span><span class="hd" style="left:478px">X</span><span class="hd" style="left:533px">2</span><span class="hd" style="left:588px;width:107px">ФОРА 1</span><span class="hd" style="left:702px;width:90px">ФОРА 2</span><span class="hd" style="left:796px;width:60px">ТОТАЛ</span><span class="hd" style="left:859px">Б</span><span class="hd" style="left:914px">М</span></div>
<div class="r">
<span class="st" style="left:10.700px;top:8.300px"><svg width="18.5" height="18.5" viewBox="0 0 24 24"><path d="M12 2.6l2.9 6 6.6.9-4.8 4.6 1.2 6.5L12 17.5l-5.9 3.1 1.2-6.5L2.5 9.5l6.6-.9z" fill="none" stroke="#a3a6ab" stroke-width="1.4" stroke-linejoin="round"/></svg></span>
<span class="nm">Дания — Северная Македония</span>
<span class="tm">Завтра в 22:45</span>
<span class="c" style="left:423px">1.28</span><span class="c" style="left:478px">5.50</span><span class="c" style="left:533px">12.00</span><span class="c w" style="left:588px"><b class="h">-1.5</b><b class="v">1.80</b></span><span class="ud" style="left:685px"><svg width="10" height="15" viewBox="0 0 10 15"><path d="M5 1.300L9.300 6.300H.700z" fill="#cbd1dd"/><path d="M5 13.700L9.300 8.700H.700z" fill="#cbd1dd"/></svg></span><span class="c w" style="left:702px"><b class="h p">+1.5</b><b class="v">2.00</b></span><span class="tot">2.5</span><span class="ud" style="left:840px"><svg width="10" height="15" viewBox="0 0 10 15"><path d="M5 1.300L9.300 6.300H.700z" fill="#cbd1dd"/><path d="M5 13.700L9.300 8.700H.700z" fill="#cbd1dd"/></svg></span><span class="c" style="left:859px">1.68</span><span class="c" style="left:914px">2.20</span><span class="more">+755</span>
</div>
<div class="r">
<span class="st" style="left:10.700px;top:8.300px"><svg width="18.5" height="18.5" viewBox="0 0 24 24"><path d="M12 2.6l2.9 6 6.6.9-4.8 4.6 1.2 6.5L12 17.5l-5.9 3.1 1.2-6.5L2.5 9.5l6.6-.9z" fill="none" stroke="#a3a6ab" stroke-width="1.4" stroke-linejoin="round"/></svg></span>
<span class="nm">Чехия — Ирландия</span>
<span class="tm">Завтра в 22:45</span>
<span class="c" style="left:423px">1.98</span><span class="c" style="left:478px">3.50</span><span class="c" style="left:533px">3.95</span><span class="c w" style="left:588px"><b class="h z">0</b><b class="v">1.45</b></span><span class="ud" style="left:685px"><svg width="10" height="15" viewBox="0 0 10 15"><path d="M5 1.300L9.300 6.300H.700z" fill="#cbd1dd"/><path d="M5 13.700L9.300 8.700H.700z" fill="#cbd1dd"/></svg></span><span class="c w" style="left:702px"><b class="h z">0</b><b class="v">2.80</b></span><span class="tot">2.5</span><span class="ud" style="left:840px"><svg width="10" height="15" viewBox="0 0 10 15"><path d="M5 1.300L9.300 6.300H.700z" fill="#cbd1dd"/><path d="M5 13.700L9.300 8.700H.700z" fill="#cbd1dd"/></svg></span><span class="c" style="left:859px">2.10</span><span class="c" style="left:914px">1.75</span><span class="more">+814</span>
</div>
<div class="r hov">
<span class="st" style="left:10.700px;top:8.300px"><svg width="18.5" height="18.5" viewBox="0 0 24 24"><path d="M12 2.6l2.9 6 6.6.9-4.8 4.6 1.2 6.5L12 17.5l-5.9 3.1 1.2-6.5L2.5 9.5l6.6-.9z" fill="none" stroke="#a3a6ab" stroke-width="1.4" stroke-linejoin="round"/></svg></span>
<span class="nm bl">Хозяева — Гости</span><span class="bd">2 матча</span>
<span class="c" style="left:423px">1.20</span><span class="c" style="left:478px">7.30</span><span class="c" style="left:533px">8.50</span><span class="c w" style="left:588px"><b class="h">-2.5</b><b class="v">2.10</b></span><span class="ud" style="left:685px"><svg width="10" height="15" viewBox="0 0 10 15"><path d="M5 1.300L9.300 6.300H.700z" fill="#cbd1dd"/><path d="M5 13.700L9.300 8.700H.700z" fill="#cbd1dd"/></svg></span><span class="c w" style="left:702px"><b class="h p">+2.5</b><b class="v">1.65</b></span><span class="tot">5.5</span><span class="ud" style="left:840px"><svg width="10" height="15" viewBox="0 0 10 15"><path d="M5 1.300L9.300 6.300H.700z" fill="#cbd1dd"/><path d="M5 13.700L9.300 8.700H.700z" fill="#cbd1dd"/></svg></span><span class="c" style="left:859px">1.94</span><span class="c" style="left:914px">1.76</span><span class="more">+75</span>
</div>
<div class="lh"><span class="st" style="left:10.700px;top:4.300px"><svg width="18.5" height="18.5" viewBox="0 0 24 24"><path d="M12 2.6l2.9 6 6.6.9-4.8 4.6 1.2 6.5L12 17.5l-5.9 3.1 1.2-6.5L2.5 9.5l6.6-.9z" fill="none" stroke="#a3a6ab" stroke-width="1.4" stroke-linejoin="round"/></svg></span><span class="lic"><svg width="11" height="17" viewBox="0 0 11 17"><path d="M2.300.5h6.400c1.100 0 1.800.7 1.800 1.800v1.700l-.7.500.7.500v2l-1.100.7 1.100.8v6.200c0 1.100-.7 1.800-1.800 1.800H2.300c-1.100 0-1.800-.7-1.800-1.800V8.500l1.100-.8L.5 7V2.300C.5 1.200 1.200.5 2.300.5z" fill="#0a0806"/><ellipse cx="5.600" cy="4.200" rx="2.300" ry="2.500" fill="#c9a65f"/><circle cx="5" cy="4.600" r="1" fill="#8a6c34"/><path d="M4.300 6.400h2.500l.3 5.800H4.100z" fill="#b8954f"/><path d="M4.800 7.600l1.600 1.200M4.900 9.600l1.400.9" stroke="#e9dcb8" stroke-width=".7"/><rect x="3.300" y="12.300" width="4.500" height="2" fill="#d0ad66"/></svg></span><span class="lt">ЧМ 2026. МЕЖКОНТИНЕНТАЛЬНЫЕ ОТБОРОЧНЫЕ МА...</span><span class="hd" style="left:423px">1</span><span class="hd" style="left:478px">X</span><span class="hd" style="left:533px">2</span><span class="hd" style="left:588px;width:107px">ФОРА 1</span><span class="hd" style="left:702px;width:90px">ФОРА 2</span><span class="hd" style="left:796px;width:60px">ТОТАЛ</span><span class="hd" style="left:859px">Б</span><span class="hd" style="left:914px">М</span></div>
<div class="r">
<span class="st" style="left:10.700px;top:8.300px"><svg width="18.5" height="18.5" viewBox="0 0 24 24"><path d="M12 2.6l2.9 6 6.6.9-4.8 4.6 1.2 6.5L12 17.5l-5.9 3.1 1.2-6.5L2.5 9.5l6.6-.9z" fill="none" stroke="#a3a6ab" stroke-width="1.4" stroke-linejoin="round"/></svg></span>
<span class="nm">Боливия — Суринам</span>
<span class="inf" style="left:205.500px"><svg width="16.600" height="16.600" viewBox="0 0 16 16"><rect x=".7" y=".7" width="14.6" height="14.6" rx="3.6" fill="#fff" stroke="#70757e" stroke-width="1.2"/><circle cx="8" cy="4.700" r=".95" fill="#5d626b"/><rect x="7.300" y="6.700" width="1.400" height="5.300" fill="#5d626b"/></svg></span>
<span class="tm">27 марта в 02:00</span>
<span class="c" style="left:423px">2.30</span><span class="c" style="left:478px">3.15</span><span class="c" style="left:533px">3.35</span><span class="c w" style="left:588px"><b class="h z">0</b><b class="v">1.60</b></span><span class="ud" style="left:685px"><svg width="10" height="15" viewBox="0 0 10 15"><path d="M5 1.300L9.300 6.300H.700z" fill="#cbd1dd"/><path d="M5 13.700L9.300 8.700H.700z" fill="#cbd1dd"/></svg></span><span class="c w" style="left:702px"><b class="h z">0</b><b class="v">2.30</b></span><span class="tot">2.5</span><span class="ud" style="left:840px"><svg width="10" height="15" viewBox="0 0 10 15"><path d="M5 1.300L9.300 6.300H.700z" fill="#cbd1dd"/><path d="M5 13.700L9.300 8.700H.700z" fill="#cbd1dd"/></svg></span><span class="c" style="left:859px">2.35</span><span class="c" style="left:914px">1.60</span><span class="more">+762</span>
</div>
<div class="r">
<span class="st" style="left:10.700px;top:8.300px"><svg width="18.5" height="18.5" viewBox="0 0 24 24"><path d="M12 2.6l2.9 6 6.6.9-4.8 4.6 1.2 6.5L12 17.5l-5.9 3.1 1.2-6.5L2.5 9.5l6.6-.9z" fill="none" stroke="#a3a6ab" stroke-width="1.4" stroke-linejoin="round"/></svg></span>
<span class="nm">Новая Каледония — Ямай...</span>
<span class="inf" style="left:255.500px"><svg width="16.600" height="16.600" viewBox="0 0 16 16"><rect x=".7" y=".7" width="14.6" height="14.6" rx="3.6" fill="#fff" stroke="#70757e" stroke-width="1.2"/><circle cx="8" cy="4.700" r=".95" fill="#5d626b"/><rect x="7.300" y="6.700" width="1.400" height="5.300" fill="#5d626b"/></svg></span>
<span class="tm">27 марта в 05:00</span>
<span class="c" style="left:423px">38.00</span><span class="c" style="left:478px">11.00</span><span class="c" style="left:533px">1.07</span><span class="c w" style="left:588px"><b class="h p">+3.5</b><b class="v">1.62</b></span><span class="ud" style="left:685px"><svg width="10" height="15" viewBox="0 0 10 15"><path d="M5 1.300L9.300 6.300H.700z" fill="#cbd1dd"/><path d="M5 13.700L9.300 8.700H.700z" fill="#cbd1dd"/></svg></span><span class="c w" style="left:702px"><b class="h">-3.5</b><b class="v">2.30</b></span><span class="tot">3.5</span><span class="ud" style="left:840px"><svg width="10" height="15" viewBox="0 0 10 15"><path d="M5 1.300L9.300 6.300H.700z" fill="#cbd1dd"/><path d="M5 13.700L9.300 8.700H.700z" fill="#cbd1dd"/></svg></span><span class="c" style="left:859px">1.68</span><span class="c" style="left:914px">2.18</span><span class="more">+207</span>
</div>
<div class="lh"><span class="st" style="left:10.700px;top:4.300px"><svg width="18.5" height="18.5" viewBox="0 0 24 24"><path d="M12 2.6l2.9 6 6.6.9-4.8 4.6 1.2 6.5L12 17.5l-5.9 3.1 1.2-6.5L2.5 9.5l6.6-.9z" fill="none" stroke="#a3a6ab" stroke-width="1.4" stroke-linejoin="round"/></svg></span><span class="lic" style="left:36px;top:3.500px"><svg width="18" height="19" viewBox="0 0 18 19"><ellipse cx="9" cy="9.500" rx="8.600" ry="9.200" fill="#1b4f93"/><path d="M0 8.200c2.500-.3 4-1.200 5.600-2.600l2.600.6 2-1.200c1.800 1.600 4 2.600 7.800 3v2.600c-2 .6-3.600 1.300-5 2.600l-3.600 2.800c-.8.500-1.500.3-2.200-.4L3.600 11.800C2.600 11 1.500 10.700 0 10.600z" fill="#fff"/><path d="M6.600 6.600c-.4 1.200.2 2 1.200 2.300l1.800-1.200 3.400 2.900M4.600 9.600l3.200 3" fill="none" stroke="#1b4f93" stroke-width=".8"/></svg></span><span class="lt">СБОРНЫЕ. ТОВАРИЩЕСКИЕ МАТЧИ</span><span class="hd" style="left:423px">1</span><span class="hd" style="left:478px">X</span><span class="hd" style="left:533px">2</span><span class="hd" style="left:588px;width:107px">ФОРА 1</span><span class="hd" style="left:702px;width:90px">ФОРА 2</span><span class="hd" style="left:796px;width:60px">ТОТАЛ</span><span class="hd" style="left:859px">Б</span><span class="hd" style="left:914px">М</span></div>
<div class="r">
<span class="st" style="left:10.700px;top:8.300px"><svg width="18.5" height="18.5" viewBox="0 0 24 24"><path d="M12 2.6l2.9 6 6.6.9-4.8 4.6 1.2 6.5L12 17.5l-5.9 3.1 1.2-6.5L2.5 9.5l6.6-.9z" fill="none" stroke="#a3a6ab" stroke-width="1.4" stroke-linejoin="round"/></svg></span>
<span class="nm">Казахстан — Намибия</span>
<span class="lclk"><svg width="15" height="15" viewBox="0 0 18 18"><circle cx="9" cy="9" r="7.6" fill="none" stroke="#74ad50" stroke-width="1.250"/><path d="M9 4.8V9.3l3 1.8" fill="none" stroke="#74ad50" stroke-width="1.250" stroke-linecap="round" stroke-linejoin="round"/></svg></span><span class="ltm">35:52</span><span class="sc">1:0</span>
<span class="c" style="left:423px">1.30</span><span class="c" style="left:478px">4.70</span><span class="c" style="left:533px">13.00</span><span class="c w" style="left:588px"><b class="h">-1.5</b><b class="v">2.55</b></span><span class="ud" style="left:685px"><svg width="10" height="15" viewBox="0 0 10 15"><path d="M5 1.300L9.300 6.300H.700z" fill="#cbd1dd"/><path d="M5 13.700L9.300 8.700H.700z" fill="#cbd1dd"/></svg></span><span class="c w" style="left:702px"><b class="h p">+1.5</b><b class="v">1.48</b></span><span class="tot">2.5</span><span class="ud" style="left:840px"><svg width="10" height="15" viewBox="0 0 10 15"><path d="M5 1.300L9.300 6.300H.700z" fill="#cbd1dd"/><path d="M5 13.700L9.300 8.700H.700z" fill="#cbd1dd"/></svg></span><span class="c" style="left:859px">2.40</span><span class="c" style="left:914px">1.55</span><span class="more">+252</span>
</div>
<div class="r subr">
<span class="nm sn">1-й тайм</span><span class="sc">1:0</span>
<span class="c" style="left:423px">1.05</span><span class="c" style="left:478px">7.90</span><span class="c" style="left:533px">87.00</span><span class="c w" style="left:588px"><b class="h">-1.5</b><b class="v">6.00</b></span><span class="ud" style="left:685px"><svg width="10" height="15" viewBox="0 0 10 15"><path d="M5 1.300L9.300 6.300H.700z" fill="#cbd1dd"/><path d="M5 13.700L9.300 8.700H.700z" fill="#cbd1dd"/></svg></span><span class="c w" style="left:702px"><b class="h p">+1.5</b><b class="v">1.08</b></span><span class="tot">1.5</span><span class="ud" style="left:840px"><svg width="10" height="15" viewBox="0 0 10 15"><path d="M5 1.300L9.300 6.300H.700z" fill="#cbd1dd"/><path d="M5 13.700L9.300 8.700H.700z" fill="#cbd1dd"/></svg></span><span class="c" style="left:859px">3.85</span><span class="c" style="left:914px">1.22</span><span class="more">+14</span>
</div>
<div class="r subr">
<span class="nm mr">Показать еще 5 подсобытий</span>
</div>
<div class="r">
<span class="st" style="left:10.700px;top:8.300px"><svg width="18.5" height="18.5" viewBox="0 0 24 24"><path d="M12 2.6l2.9 6 6.6.9-4.8 4.6 1.2 6.5L12 17.5l-5.9 3.1 1.2-6.5L2.5 9.5l6.6-.9z" fill="none" stroke="#a3a6ab" stroke-width="1.4" stroke-linejoin="round"/></svg></span>
<span class="nm">Кыргызстан — Экваториальна...</span>
<span class="tm">Сегодня в 17:00</span>
<span class="c" style="left:423px">3.30</span><span class="c" style="left:478px">3.10</span><span class="c" style="left:533px">2.35</span><span class="c w" style="left:588px"><b class="h z">0</b><b class="v">2.25</b></span><span class="ud" style="left:685px"><svg width="10" height="15" viewBox="0 0 10 15"><path d="M5 1.300L9.300 6.300H.700z" fill="#cbd1dd"/><path d="M5 13.700L9.300 8.700H.700z" fill="#cbd1dd"/></svg></span><span class="c w" style="left:702px"><b class="h z">0</b><b class="v">1.65</b></span><span class="tot">2.5</span><span class="ud" style="left:840px"><svg width="10" height="15" viewBox="0 0 10 15"><path d="M5 1.300L9.300 6.300H.700z" fill="#cbd1dd"/><path d="M5 13.700L9.300 8.700H.700z" fill="#cbd1dd"/></svg></span><span class="c" style="left:859px">2.20</span><span class="c" style="left:914px">1.65</span><span class="more">+683</span>
</div>
<div class="r">
<span class="st" style="left:10.700px;top:8.300px"><svg width="18.5" height="18.5" viewBox="0 0 24 24"><path d="M12 2.6l2.9 6 6.6.9-4.8 4.6 1.2 6.5L12 17.5l-5.9 3.1 1.2-6.5L2.5 9.5l6.6-.9z" fill="none" stroke="#a3a6ab" stroke-width="1.4" stroke-linejoin="round"/></svg></span>
<span class="nm">Пуэрто-Рико — Гуам</span>
<span class="tm">Завтра в 03:00</span>
<span class="c" style="left:423px">1.20</span><span class="c" style="left:478px">6.00</span><span class="c" style="left:533px">17.00</span><span class="c w" style="left:588px"><b class="h">-1.5</b><b class="v">1.68</b></span><span class="ud" style="left:685px"><svg width="10" height="15" viewBox="0 0 10 15"><path d="M5 1.300L9.300 6.300H.700z" fill="#cbd1dd"/><path d="M5 13.700L9.300 8.700H.700z" fill="#cbd1dd"/></svg></span><span class="c w" style="left:702px"><b class="h p">+1.5</b><b class="v">2.20</b></span><span class="tot">2.5</span><span class="ud" style="left:840px"><svg width="10" height="15" viewBox="0 0 10 15"><path d="M5 1.300L9.300 6.300H.700z" fill="#cbd1dd"/><path d="M5 13.700L9.300 8.700H.700z" fill="#cbd1dd"/></svg></span><span class="c" style="left:859px">1.75</span><span class="c" style="left:914px">2.10</span><span class="more">+632</span>
</div>
<div class="r">
<span class="st" style="left:10.700px;top:8.300px"><svg width="18.5" height="18.5" viewBox="0 0 24 24"><path d="M12 2.6l2.9 6 6.6.9-4.8 4.6 1.2 6.5L12 17.5l-5.9 3.1 1.2-6.5L2.5 9.5l6.6-.9z" fill="none" stroke="#a3a6ab" stroke-width="1.4" stroke-linejoin="round"/></svg></span>
<span class="nm">Аруба — Макао</span>
<span class="tm">Завтра в 14:30</span>
<span class="c" style="left:423px">1.60</span><span class="c" style="left:478px">4.00</span><span class="c" style="left:533px">5.50</span><span class="c w" style="left:588px"><b class="h">-1</b><b class="v">2.05</b></span><span class="ud" style="left:685px"><svg width="10" height="15" viewBox="0 0 10 15"><path d="M5 1.300L9.300 6.300H.700z" fill="#cbd1dd"/><path d="M5 13.700L9.300 8.700H.700z" fill="#cbd1dd"/></svg></span><span class="c w" style="left:702px"><b class="h p">+1</b><b class="v">1.77</b></span><span class="tot">2.5</span><span class="ud" style="left:840px"><svg width="10" height="15" viewBox="0 0 10 15"><path d="M5 1.300L9.300 6.300H.700z" fill="#cbd1dd"/><path d="M5 13.700L9.300 8.700H.700z" fill="#cbd1dd"/></svg></span><span class="c" style="left:859px">2.00</span><span class="c" style="left:914px">1.80</span><span class="more">+692</span>
</div>
<div class="r">
<span class="st" style="left:10.700px;top:8.300px"><svg width="18.5" height="18.5" viewBox="0 0 24 24"><path d="M12 2.6l2.9 6 6.6.9-4.8 4.6 1.2 6.5L12 17.5l-5.9 3.1 1.2-6.5L2.5 9.5l6.6-.9z" fill="none" stroke="#a3a6ab" stroke-width="1.4" stroke-linejoin="round"/></svg></span>
<span class="nm">Вьетнам — Бангладеш</span>
<span class="tm">Завтра в 15:00</span>
<span class="c" style="left:423px">1.18</span><span class="c" style="left:478px">6.10</span><span class="c" style="left:533px">25.00</span><span class="c w" style="left:588px"><b class="h">-2.5</b><b class="v">2.20</b></span><span class="ud" style="left:685px"><svg width="10" height="15" viewBox="0 0 10 15"><path d="M5 1.300L9.300 6.300H.700z" fill="#cbd1dd"/><path d="M5 13.700L9.300 8.700H.700z" fill="#cbd1dd"/></svg></span><span class="c w" style="left:702px"><b class="h p">+2.5</b><b class="v">1.67</b></span><span class="tot">3.5</span><span class="ud" style="left:840px"><svg width="10" height="15" viewBox="0 0 10 15"><path d="M5 1.300L9.300 6.300H.700z" fill="#cbd1dd"/><path d="M5 13.700L9.300 8.700H.700z" fill="#cbd1dd"/></svg></span><span class="c" style="left:859px">2.12</span><span class="c" style="left:914px">1.72</span><span class="more">+658</span>
</div>
</div>
</body></html>
